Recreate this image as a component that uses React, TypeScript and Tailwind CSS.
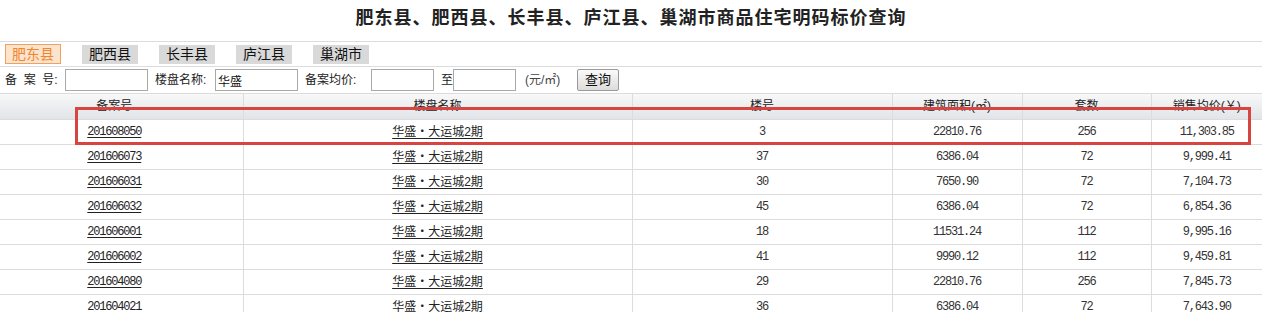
const tabs = ["肥东县", "肥西县", "长丰县", "庐江县", "巢湖市"];

const rows = [
  ["201608050", "3", "22810.76", "256", "11,303.85"],
  ["201606073", "37", "6386.04", "72", "9,999.41"],
  ["201606031", "30", "7650.90", "72", "7,104.73"],
  ["201606032", "45", "6386.04", "72", "6,854.36"],
  ["201606001", "18", "11531.24", "112", "9,995.16"],
  ["201606002", "41", "9990.12", "112", "9,459.81"],
  ["201604080", "29", "22810.76", "256", "7,845.73"],
  ["201604021", "36", "6386.04", "72", "7,643.90"],
];

const headers = ["备案号", "楼盘名称", "楼号", "建筑面积(㎡)", "套数", "销售均价(￥)"];
const widths = ["w-[243px] pr-[14px]", "w-[389px]", "w-[260px]", "w-[130px]", "w-[129px]", "w-[111px]"];

const mono = "font-['Liberation_Mono',monospace] text-[12px] tracking-[-1.2px]";

export default function App() {
  return (
    <div className="relative w-[1262px] h-[312px] overflow-hidden bg-white text-[#333] font-['Liberation_Sans','Noto_Sans_CJK_SC',sans-serif]">
      <div className="h-[42px] border-b border-[#dcdcdc] flex items-center justify-center pb-[5px]">
        <h1 className="text-[18px] font-bold tracking-[1px] text-[#222]">
          肥东县、肥西县、长丰县、庐江县、巢湖市商品住宅明码标价查询
        </h1>
      </div>

      <div className="h-[25px] border-b border-[#dcdcdc] flex items-center pl-[5px] gap-[21px]">
        {tabs.map((t, i) =>
          i === 0 ? (
            <span
              key={t}
              className="w-[56px] h-[20px] flex items-center justify-center border border-[#f0a060] bg-[#fce4cc] text-[#ef8530] text-[14px]"
            >
              {t}
            </span>
          ) : (
            <span
              key={t}
              className="w-[56px] h-[19px] flex items-center justify-center bg-[#d9d9d9] text-[#111] text-[14px]"
            >
              {t}
            </span>
          )
        )}
      </div>

      <div className="h-[27px] border-b border-[#dcdcdc] flex items-center pl-[5px] text-[12px] text-[#222] whitespace-nowrap">
        <span className="w-[60px] shrink-0">备&nbsp;&nbsp;案&nbsp;&nbsp;号:</span>
        <input className="w-[83px] h-[22px] border border-[#a9a9a9] bg-white px-[2px] text-[12px]" />
        <span className="ml-[7px] w-[60px] shrink-0">楼盘名称:</span>
        <input
          defaultValue="华盛"
          className="w-[83px] h-[22px] border border-[#a9a9a9] bg-white px-[2px] text-[12px] text-[#111]"
        />
        <span className="ml-[7px] w-[66px] shrink-0">备案均价:</span>
        <input className="w-[63px] h-[22px] border border-[#a9a9a9] bg-white px-[2px] text-[12px]" />
        <span className="ml-[7px] w-[12px] shrink-0">至</span>
        <input className="w-[63px] h-[22px] border border-[#a9a9a9] bg-white px-[2px] text-[12px]" />
        <span className="ml-[9px] w-[52px] shrink-0 text-[#444]">(元/㎡)</span>
        <button className="w-[42px] h-[22px] border border-[#9a9a9a] rounded-[2px] bg-gradient-to-b from-[#fafafa] to-[#dcdcdc] text-[13px] text-[#111] flex items-center justify-center">
          查询
        </button>
      </div>

      <table className="border-collapse table-fixed w-[1262px] text-[12px]">
        <thead>
          <tr className="h-[25px] bg-gradient-to-b from-[#f8f8f8] to-[#e1e4e9]">
            {headers.map((h, i) => (
              <th
                key={h}
                className={`${widths[i]} font-normal text-center align-top pt-[3px] border-b border-[#dcdcdc] ${i > 0 ? "border-l" : ""} border-[#dcdcdc] text-[#222]`}
              >
                {h}
              </th>
            ))}
          </tr>
        </thead>
        <tbody>
          {rows.map((r) => (
            <tr key={r[0] + r[1]} className="h-[25px]">
              <td className="text-center pr-[14px] border-b border-[#dcdcdc]">
                <span className={`${mono} underline underline-offset-2 text-[#222]`}>{r[0]}</span>
              </td>
              <td className="text-center border-b border-l border-[#dcdcdc]">
                <span className="underline underline-offset-2 text-[#222]">华盛・大运城2期</span>
              </td>
              <td className={`text-center border-b border-l border-[#dcdcdc] ${mono}`}>{r[1]}</td>
              <td className={`text-center border-b border-l border-[#dcdcdc] ${mono}`}>{r[2]}</td>
              <td className={`text-center border-b border-l border-[#dcdcdc] ${mono}`}>{r[3]}</td>
              <td className={`text-center border-b border-l border-[#dcdcdc] ${mono}`}>{r[4]}</td>
            </tr>
          ))}
        </tbody>
      </table>

      {/* highlight box drawn over the first row */}
      <div className="absolute left-[75px] top-[107px] w-[1176px] h-[38px] border-[3px] border-[#d8443f] pointer-events-none" />
    </div>
  );
}
